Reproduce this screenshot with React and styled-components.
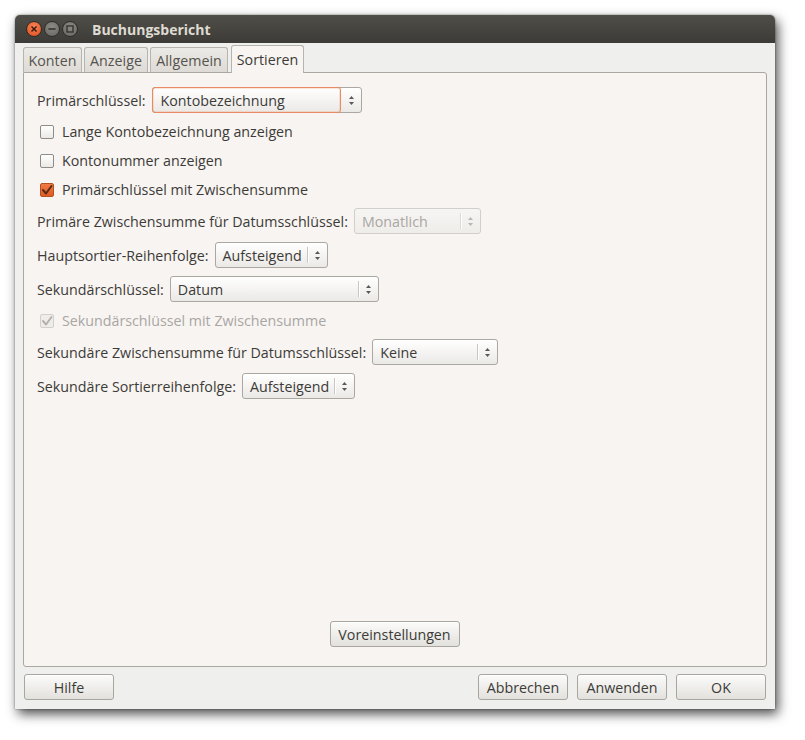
import React from "react";
import styled, { createGlobalStyle, css } from "styled-components";

const GlobalStyle = createGlobalStyle`
  body {
    margin: 0;
    background: #ffffff;
    font-family: "Open Sans", "Noto Sans", "DejaVu Sans", sans-serif;
    font-size: 14.25px;
    color: #3c3b37;
  }
`;

const Page = styled.div`
  padding: 15px 0 30px 15px;
`;

const Window = styled.div`
  width: 760px;
  height: 694px;
  display: flex;
  flex-direction: column;
  background: #eff0ee;
  border-radius: 5px 5px 0 0;
  box-shadow: 3px 5px 12px rgba(0, 0, 0, 0.7), 0 0 2px rgba(0, 0, 0, 0.5);
`;

const TitleBar = styled.div`
  height: 28px;
  flex: none;
  display: flex;
  align-items: center;
  padding-left: 11px;
  border-radius: 5px 5px 0 0;
  background: linear-gradient(#4f4e48, #3c3b37);
`;

const TitleButtons = styled.div`
  display: flex;
  gap: 2px;
`;

const TitleButton = styled.div`
  width: 16px;
  height: 16px;
  border-radius: 50%;
  display: flex;
  align-items: center;
  justify-content: center;
  box-sizing: border-box;
  border: 1px solid #2e2d29;
  ${(p) =>
    p.$close
      ? css`
          background: radial-gradient(circle at 50% 35%, #f68556, #df4a1c);
        `
      : css`
          background: radial-gradient(circle at 50% 35%, #8c8b85, #65645e);
        `}
`;

const Title = styled.div`
  margin-left: 14px;
  font-weight: bold;
  font-size: 14px;
  color: #dfdbd2;
`;

const Body = styled.div`
  flex: 1;
  display: flex;
  flex-direction: column;
  padding: 2px 8px 9px 8px;
  min-height: 0;
`;

const TabStrip = styled.div`
  display: flex;
  align-items: flex-end;
  height: 28px;
  margin-bottom: -1px;
  position: relative;
  z-index: 1;
`;

const Tab = styled.div`
  box-sizing: border-box;
  width: ${(p) => p.$width}px;
  display: flex;
  align-items: center;
  justify-content: center;
  margin-right: 2px;
  border: 1px solid #b7b3ad;
  border-bottom: none;
  border-radius: 3px 3px 0 0;
  white-space: nowrap;
  ${(p) =>
    p.$active
      ? css`
          height: 28px;
          background: #f8f4f2;
          color: #3c3b37;
          margin-left: 1px;
        `
      : css`
          height: 25px;
          margin-bottom: 1px;
          background: linear-gradient(#eceae6, #dedbd6);
          color: #55534e;
        `}
`;

const Panel = styled.div`
  flex: 1;
  display: flex;
  flex-direction: column;
  background: #f8f4f2;
  border: 1px solid #aaa6a0;
  border-radius: 0 3px 3px 3px;
  padding: 14px 14px 19px 13px;
`;

const Form = styled.div`
  display: flex;
  flex-direction: column;
  gap: 8px;
`;

const FieldRow = styled.div`
  display: flex;
  align-items: center;
  height: 26px;
  gap: 6px;
`;

const Label = styled.span`
  white-space: nowrap;
  color: #3c3b37;
`;

const Combo = styled.div`
  box-sizing: border-box;
  width: ${(p) => p.$width}px;
  height: 26px;
  display: flex;
  border: 1px solid ${(p) => (p.$disabled ? "#d2cfcb" : "#aba7a1")};
  border-radius: 3px;
  background: ${(p) =>
    p.$disabled
      ? "linear-gradient(#f7f5f3, #efedea)"
      : "linear-gradient(#ffffff, #ebe9e6)"};
  color: ${(p) => (p.$disabled ? "#a9a6a2" : "#3c3b37")};
`;

const ComboField = styled.div`
  flex: 1;
  display: flex;
  align-items: center;
  padding-left: 7px;
  white-space: nowrap;
  ${(p) =>
    p.$focused &&
    css`
      margin: -1px 0 -1px -1px;
      padding-left: 8px;
      border: 1px solid #ea8a62;
      border-radius: 3px;
      box-shadow: inset 0 0 0 1px rgba(240, 150, 110, 0.25);
    `}
`;

const Separator = styled.div`
  width: 1px;
  margin: 4px 0;
  background: ${(p) => (p.$disabled ? "#dcd9d5" : "#c9c5c0")};
  box-shadow: 1px 0 0 #ffffff;
  visibility: ${(p) => (p.$hidden ? "hidden" : "visible")};
`;

const ArrowBox = styled.div`
  width: 19px;
  display: flex;
  align-items: center;
  justify-content: center;
`;

const CheckRow = styled.div`
  display: flex;
  align-items: center;
  height: 21px;
  padding-left: 3px;
  gap: 8px;
  color: ${(p) => (p.$disabled ? "#a9a6a2" : "#3c3b37")};
`;

const Box = styled.div`
  box-sizing: border-box;
  width: 14px;
  height: 14px;
  border-radius: 2px;
  display: flex;
  align-items: center;
  justify-content: center;
  ${(p) =>
    p.$checked && !p.$disabled
      ? css`
          border: 1px solid #b5501f;
          background: linear-gradient(#f07a45, #de5a25);
        `
      : p.$disabled
      ? css`
          border: 1px solid #d3d0cc;
          background: #efedea;
        `
      : css`
          border: 1px solid #8f8b86;
          background: linear-gradient(#ffffff, #ebe9e6);
        `}
`;

const Button = styled.button`
  box-sizing: border-box;
  width: ${(p) => p.$width || 90}px;
  height: 26px;
  padding: 0;
  font-family: inherit;
  font-size: 14.25px;
  color: #3c3b37;
  border: 1px solid #a9a59f;
  border-radius: 3px;
  background: linear-gradient(#fbfbfa, #e3e1dd);
  box-shadow: inset 0 1px 0 #ffffff;
`;

const Footer = styled.div`
  margin-top: auto;
  display: flex;
  justify-content: center;
`;

const ButtonRow = styled.div`
  display: flex;
  margin-top: 7px;
  padding: 0 1px;
  gap: 9px;
`;

const Spacer = styled.div`
  flex: 1;
`;

function Arrows({ disabled }) {
  const c = disabled ? "#b9b6b2" : "#5a5854";
  return (
    <svg width="7" height="11" viewBox="0 0 7 11">
      <path d="M3.5 1 L6 4 H1 Z" fill={c} />
      <path d="M3.5 10 L6 7 H1 Z" fill={c} />
    </svg>
  );
}

function ComboBox({ value, width, disabled, focused }) {
  return (
    <Combo $width={width} $disabled={disabled}>
      <ComboField $focused={focused}>{value}</ComboField>
      <Separator $disabled={disabled} $hidden={focused} />
      <ArrowBox>
        <Arrows disabled={disabled} />
      </ArrowBox>
    </Combo>
  );
}

function Check({ label, checked, disabled }) {
  return (
    <CheckRow $disabled={disabled}>
      <Box $checked={checked} $disabled={disabled}>
        {checked && (
          <svg width="12" height="12" viewBox="0 0 12 12">
            <path
              d="M2 6 L5 9.5 L10.5 2"
              fill="none"
              stroke={disabled ? "#b4b1ad" : "#5b2a14"}
              strokeWidth="2"
              strokeLinecap="round"
              strokeLinejoin="round"
            />
          </svg>
        )}
      </Box>
      <span>{label}</span>
    </CheckRow>
  );
}

export default function App() {
  return (
    <Page>
      <GlobalStyle />
      <Window>
        <TitleBar>
          <TitleButtons>
            <TitleButton $close>
              <svg width="8" height="8" viewBox="0 0 8 8">
                <path d="M1.5 1.5 L6.5 6.5 M6.5 1.5 L1.5 6.5" stroke="#3a1a0c" strokeWidth="1.5" />
              </svg>
            </TitleButton>
            <TitleButton>
              <svg width="8" height="8" viewBox="0 0 8 8">
                <path d="M0.5 4 H7.5" stroke="#35342f" strokeWidth="1.6" />
              </svg>
            </TitleButton>
            <TitleButton>
              <svg width="8" height="8" viewBox="0 0 8 8">
                <rect x="1" y="1" width="6" height="6" fill="none" stroke="#35342f" strokeWidth="1.4" />
              </svg>
            </TitleButton>
          </TitleButtons>
          <Title>Buchungsbericht</Title>
        </TitleBar>
        <Body>
          <TabStrip>
            <Tab $width={59}>Konten</Tab>
            <Tab $width={64}>Anzeige</Tab>
            <Tab $width={78}>Allgemein</Tab>
            <Tab $width={73} $active>Sortieren</Tab>
          </TabStrip>
          <Panel>
            <Form>
              <FieldRow>
                <Label>Primärschlüssel:</Label>
                <ComboBox value="Kontobezeichnung" width={210} focused />
              </FieldRow>
              <Check label="Lange Kontobezeichnung anzeigen" />
              <Check label="Kontonummer anzeigen" />
              <Check label="Primärschlüssel mit Zwischensumme" checked />
              <FieldRow>
                <Label>Primäre Zwischensumme für Datumsschlüssel:</Label>
                <ComboBox value="Monatlich" width={127} disabled />
              </FieldRow>
              <FieldRow>
                <Label>Hauptsortier-Reihenfolge:</Label>
                <ComboBox value="Aufsteigend" width={113} />
              </FieldRow>
              <FieldRow>
                <Label>Sekundärschlüssel:</Label>
                <ComboBox value="Datum" width={209} />
              </FieldRow>
              <Check label="Sekundärschlüssel mit Zwischensumme" checked disabled />
              <FieldRow>
                <Label>Sekundäre Zwischensumme für Datumsschlüssel:</Label>
                <ComboBox value="Keine" width={126} />
              </FieldRow>
              <FieldRow>
                <Label>Sekundäre Sortierreihenfolge:</Label>
                <ComboBox value="Aufsteigend" width={113} />
              </FieldRow>
            </Form>
            <Footer>
              <Button $width={130}>Voreinstellungen</Button>
            </Footer>
          </Panel>
          <ButtonRow>
            <Button>Hilfe</Button>
            <Spacer />
            <Button>Abbrechen</Button>
            <Button>Anwenden</Button>
            <Button>OK</Button>
          </ButtonRow>
        </Body>
      </Window>
    </Page>
  );
}
